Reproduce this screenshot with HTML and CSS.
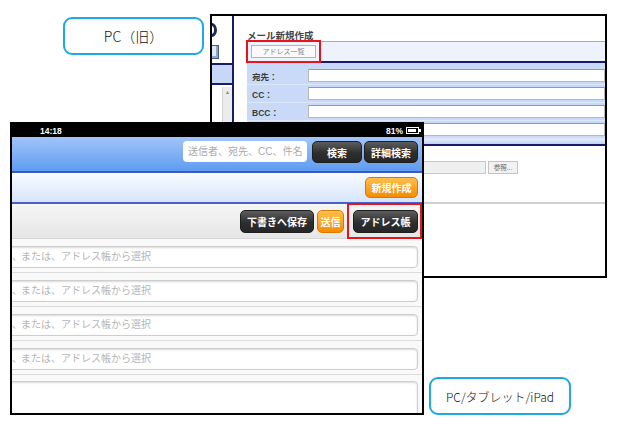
FILE: index.html
```html
<!DOCTYPE html>
<html lang="ja">
<head>
  <meta charset="UTF-8">
  <title>アドレス帳ボタンの位置</title>
  <link rel="stylesheet" href="styles.css">
</head>
<body>
  <div class="stage">
    <div class="label label-pc">PC（旧）</div>

    <!-- PC (old) screen -->
    <div class="pc">
      <div class="pc-side">
        <div class="pc-logo"><span class="pc-ring"></span></div>
        <div class="pc-icon"></div>
        <div class="pc-band"></div>
        <div class="pc-list"><div class="pc-scroll">▲</div></div>
      </div>
      <div class="pc-main">
        <div class="pc-title">メール新規作成</div>
        <div class="pc-toolbar">
          <span class="pc-btn">アドレス一覧</span>
        </div>
        <div class="pc-form">
          <div class="pc-row"><span class="pc-label">宛先：</span><span class="pc-input"></span></div>
          <div class="pc-row"><span class="pc-label">CC：</span><span class="pc-input"></span></div>
          <div class="pc-row"><span class="pc-label">BCC：</span><span class="pc-input"></span></div>
          <div class="pc-row"><span class="pc-label">件名：</span><span class="pc-input"></span></div>
          <div class="pc-bar"></div>
        </div>
        <div class="pc-file">
          <span class="pc-file-input"></span>
          <span class="pc-file-btn">参照...</span>
        </div>
      </div>
    </div>

    <!-- tablet screen -->
    <div class="ipad">
      <div class="ipad-status">
        <span>14:18</span>
        <span class="ipad-battery">81% <span class="battery"></span></span>
      </div>
      <div class="ipad-top">
        <span class="search">送信者、宛先、CC、件名</span>
        <span class="btn btn-dark btn-search">検索</span>
        <span class="btn btn-dark btn-detail">詳細検索</span>
      </div>
      <div class="ipad-sub">
        <span class="btn btn-orange btn-new">新規作成</span>
      </div>
      <div class="ipad-tools">
        <span class="btn btn-dark btn-draft">下書きへ保存</span>
        <span class="btn btn-orange btn-send">送信</span>
        <span class="btn btn-dark btn-book">アドレス帳</span>
      </div>
      <div class="ipad-row"><span class="field"><span class="cut">、</span>または、アドレス帳から選択</span></div>
      <div class="ipad-row"><span class="field"><span class="cut">、</span>または、アドレス帳から選択</span></div>
      <div class="ipad-row"><span class="field"><span class="cut">、</span>または、アドレス帳から選択</span></div>
      <div class="ipad-row"><span class="field"><span class="cut">、</span>または、アドレス帳から選択</span></div>
      <div class="ipad-body"><div class="textarea"></div></div>
    </div>

    <div class="mark mark-pc"></div>
    <div class="mark mark-ipad"></div>

    <div class="label label-ipad">PC/タブレット/iPad</div>
  </div>
</body>
</html>
```

FILE: styles.css
```css
* {
  box-sizing: border-box;
}
body {
  margin: 0;
  background: #fff;
  font-family: "Liberation Sans", "Noto Sans CJK JP", sans-serif;
}
.stage {
  position: relative;
  width: 617px;
  height: 431px;
  overflow: hidden;
  background: #fff;
}
.label {
  position: absolute;
  display: flex;
  align-items: center;
  justify-content: center;
  border: 2px solid #1ea8e4;
  border-radius: 9px;
  background: #fff;
  color: #111;
  font-family: "Noto Sans CJK JP", sans-serif;
  font-weight: 300;
}
.label-pc {
  left: 63px;
  top: 17px;
  width: 141px;
  height: 38px;
  font-size: 14px;
}
.label-ipad {
  left: 429px;
  top: 377px;
  width: 142px;
  height: 38px;
  font-size: 12px;
}
.mark {
  position: absolute;
  border: 2px solid #e8141b;
}
.mark-pc {
  left: 246px;
  top: 40px;
  width: 75px;
  height: 23px;
}
.mark-ipad {
  left: 347px;
  top: 203px;
  width: 75px;
  height: 36px;
}

/* PC (old) */
.pc {
  position: absolute;
  left: 210px;
  top: 14px;
  width: 397px;
  height: 264px;
  border: 2px solid #000;
  background: #fff;
  display: flex;
  overflow: hidden;
}
.pc-side {
  width: 22px;
  display: flex;
  flex-direction: column;
  border-right: 2px solid #1b1b6c;
}
.pc-logo {
  height: 29px;
  padding-top: 7px;
}
.pc-ring {
  display: block;
  width: 11px;
  height: 14px;
  margin-left: -6px;
  border: 3px solid #1b2a5c;
  border-radius: 50%;
}
.pc-icon {
  width: 7px;
  height: 14px;
  border: 1px solid #4a5a8a;
  border-left: none;
  background: #dfe7f5;
  box-shadow: inset -2px -2px 0 #8fa6cf;
}
.pc-band {
  height: 22px;
  margin-top: 4px;
  background: #c6d8f6;
  border-top: 2px solid #1b1b6c;
  border-bottom: 2px solid #1b1b6c;
}
.pc-list {
  flex: 1;
  display: flex;
  justify-content: flex-end;
  padding-top: 2px;
}
.pc-scroll {
  width: 10px;
  background: #ececec;
  border-left: 1px solid #d4d4d4;
  color: #888;
  font-size: 5px;
  text-align: center;
  line-height: 10px;
}
.pc-main {
  flex: 1;
  padding-left: 13px;
  display: flex;
  flex-direction: column;
}
.pc-title {
  height: 26px;
  padding-top: 12px;
  font-size: 9.5px;
  font-weight: bold;
  color: #444;
  border-bottom: 1px solid #9aaad6;
}
.pc-toolbar {
  height: 21px;
  padding: 3px 0 0 4px;
  background: #edf2fc;
  border-bottom: 2px solid #1b1b6c;
}
.pc-btn {
  display: block;
  width: 65px;
  height: 13px;
  border: 1px solid #b4b4b4;
  background: #fafafa;
  color: #888;
  font-size: 7px;
  line-height: 11px;
  text-align: center;
}
.pc-form {
  background: #c8daf7;
  padding-top: 4px;
  border-bottom: 2px solid #1b1b6c;
}
.pc-row {
  display: flex;
  align-items: center;
  height: 18px;
  border-bottom: 1px solid #dce7fa;
}
.pc-label {
  width: 61px;
  padding-left: 5px;
  font-size: 8.5px;
  font-weight: bold;
  color: #3a3a3a;
}
.pc-input {
  flex: 1;
  height: 13px;
  background: #fff;
  border: 1px solid #b8b8b8;
  border-top-color: #999;
}
.pc-bar {
  height: 5px;
  background: linear-gradient(#e4ecfb, #bcd0f3);
}
.pc-file {
  height: 58px;
  display: flex;
  align-items: flex-start;
  padding: 15px 87px 0 0;
  border-bottom: 2px solid #cfcfcf;
}
.pc-file-input {
  flex: 1;
  height: 13px;
  background: #efefef;
  border: 1px solid #c8c8c8;
}
.pc-file-btn {
  width: 30px;
  height: 13px;
  margin-left: 2px;
  border: 1px solid #c4c4c4;
  background: #f2f2f2;
  color: #666;
  font-size: 6.5px;
  line-height: 11px;
  text-align: center;
}

/* tablet */
.ipad {
  position: absolute;
  left: 10px;
  top: 122px;
  width: 414px;
  height: 293px;
  border: 2px solid #000;
  background: #fff;
  overflow: hidden;
}
.ipad-status {
  height: 13px;
  background: #000;
  color: #fff;
  font-size: 8.5px;
  font-weight: bold;
  display: flex;
  align-items: center;
  justify-content: space-between;
  padding: 0 1px 0 28px;
}
.ipad-battery {
  display: flex;
  align-items: center;
  gap: 3px;
}
.battery {
  position: relative;
  width: 13px;
  height: 7px;
  margin-right: 2px;
  border: 1px solid #fff;
  background: linear-gradient(90deg, #fff 80%, #000 80%);
  box-shadow: inset 0 0 0 1px #000;
}
.battery::after {
  content: "";
  position: absolute;
  right: -3px;
  top: 1px;
  width: 2px;
  height: 3px;
  background: #fff;
}
.ipad-top {
  height: 36px;
  display: flex;
  justify-content: flex-end;
  align-items: flex-start;
  padding: 4px 4px 0 0;
  background: linear-gradient(#a2c4fa, #5e9cf0);
  border-bottom: 2px solid #3c58c6;
}
.search {
  width: 124px;
  height: 21px;
  margin-right: 5px;
  padding-left: 5px;
  background: #fff;
  border-radius: 4px;
  color: #aaa;
  font-size: 10px;
  line-height: 21px;
}
.btn {
  display: flex;
  align-items: center;
  justify-content: center;
  border-radius: 5px;
  color: #fff;
  font-size: 10px;
  font-weight: bold;
}
.btn-dark {
  background: linear-gradient(#5c5c5c, #2e2e2e 55%, #262626);
  border: 1px solid #1e1e1e;
}
.btn-orange {
  background: linear-gradient(#ffc04e, #f58c00);
  border: 1px solid #d87a00;
}
.btn-search {
  width: 50px;
  height: 22px;
  margin-right: 2px;
}
.btn-detail {
  width: 54px;
  height: 22px;
}
.ipad-sub {
  height: 31px;
  display: flex;
  justify-content: flex-end;
  padding: 4px 4px 0 0;
  background: linear-gradient(#fafcff, #d6e4fb);
  border-bottom: 2px solid #4a62c8;
}
.btn-new {
  width: 53px;
  height: 21px;
}
.ipad-tools {
  height: 35px;
  display: flex;
  justify-content: flex-end;
  align-items: flex-start;
  padding: 6px 4px 0 0;
  background: linear-gradient(#f6f6f6, #e6e6e6);
  border-bottom: 1px solid #d6d6d6;
}
.btn-draft {
  width: 74px;
  height: 23px;
  margin-right: 3px;
}
.btn-send {
  width: 27px;
  height: 23px;
  margin-right: 9px;
}
.btn-book {
  width: 65px;
  height: 23px;
}
.ipad-row {
  height: 34px;
  padding: 7px 4px 0 0;
  background: #f9f9f9;
  border-bottom: 1px solid #dcdcdc;
}
.field,
.textarea {
  display: block;
  margin-left: -20px;
  background: #fff;
  border: 1px solid #cdcdcd;
  border-radius: 4px;
  box-shadow: inset 0 1px 2px rgba(0, 0, 0, 0.15);
}
.field {
  height: 22px;
  padding-left: 19px;
  color: #b4b4b4;
  font-size: 10px;
  line-height: 20px;
  white-space: nowrap;
}
.field .cut {
  display: inline-block;
  width: 9px;
}
.ipad-body {
  padding: 6px 4px 0 0;
  background: #f9f9f9;
}
.textarea {
  height: 60px;
}
```
